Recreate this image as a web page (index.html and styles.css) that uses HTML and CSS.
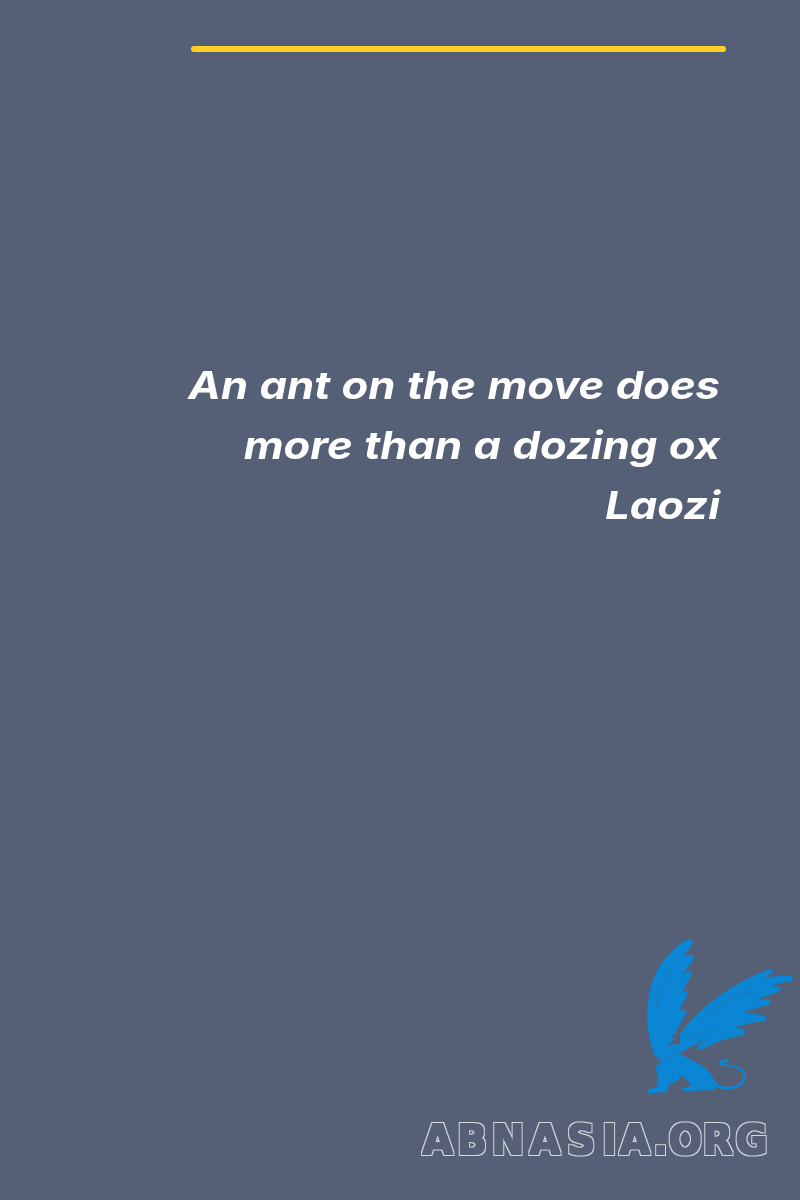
FILE: index.html
```html
<!DOCTYPE html>
<html lang="en">

<head>
  <meta charset="UTF-8">
  <meta name="viewport" content="width=device-width, initial-scale=1.0">
  <title>Quote</title>
  <link rel="stylesheet" href="styles.css">
</head>

<body>
  <div id="page">
    <div class="bar"></div>
    <div class="quote">
      <p>An ant on the move does</p>
      <p>more than a dozing ox</p>
      <p>Laozi</p>
    </div>
    <div class="brand">
      <svg class="griffin" viewBox="0 0 510 510" aria-hidden="true">
        <!-- left wing -->
        <path class="blue" d="M170 29Q186 25 189 38Q184 52 160 78Q176 72 190 76Q198 84 186 97L158 132Q172 124 182 126Q188 132 178 148L156 187Q166 180 172 183Q176 192 166 208L146 243Q156 238 164 240Q172 248 162 264L140 300L110 330L78 388Q62 350 54 300Q46 240 60 180Q74 120 110 80Q140 46 170 29Z"/>
        <path class="cut" d="M122 118Q90 170 76 240" />
        <!-- right wing -->
        <path class="blue" d="M150 312Q176 276 214 240Q270 190 340 152Q380 130 420 118Q432 118 428 128L404 142Q450 136 484 138Q494 146 486 152Q450 160 418 167Q440 168 452 173Q456 182 444 186L372 212Q400 206 418 208Q426 216 416 224L340 246Q376 252 406 257Q414 266 404 272Q360 280 310 292Q330 296 344 300Q350 308 340 314Q306 322 272 332L212 360Q200 358 204 346L240 322L180 352L150 370Z"/>
        <path class="cut" d="M208 276Q280 210 372 178" />
        <path class="cut" d="M165 330Q210 300 262 298" />
        <!-- body -->
        <path class="blue" d="M90 296L104 300L118 296L132 300L142 310L126 316L130 330L112 350L138 340L165 356L150 372Q190 392 225 412Q245 430 254 452Q270 472 300 470Q330 468 340 446Q344 424 316 414L268 404Q262 396 274 392L278 386L302 388L292 396L276 398Q300 408 326 410Q350 424 348 448Q340 474 300 478Q272 480 256 468Q262 476 250 480L160 484Q150 480 164 472L186 468Q172 452 156 436Q146 456 118 462L112 478Q118 486 104 487L52 490Q44 484 58 478L80 472L86 440L76 414L90 396L84 372L96 352Q84 324 92 312Z"/>
        <path class="cut" d="M76 412L150 358" />
      </svg>
      <svg class="wordmark" viewBox="0 0 350 40">
        <defs>
          <filter id="ring" filterUnits="userSpaceOnUse" x="0" y="0" width="350" height="40">
            <feMorphology in="SourceAlpha" operator="dilate" radius="2" result="outer"/>
            <feMorphology in="SourceAlpha" operator="dilate" radius="1" result="inner"/>
            <feComposite in="outer" in2="inner" operator="out" result="edge"/>
            <feFlood flood-color="#d4d6da"/>
            <feComposite in2="edge" operator="in"/>
          </filter>
        </defs>
        <g filter="url(#ring)">
          <text transform="scale(.944 1)" y="36" x="3 39.5 76 116.5 156 193 211.5 247 263.5 299.5 334.5">ABNASIA.ORG</text>
        </g>
      </svg>
    </div>
  </div>
</body>

</html>
```

FILE: styles.css
```css
* {
  margin: 0;
  padding: 0;
  box-sizing: border-box;
}

body {
  background: #555f75;
}

#page {
  display: flex;
  flex-direction: column;
  height: 1200px;
  overflow: hidden;
  padding: 46px 0 0 0;
}

.bar {
  height: 6px;
  margin: 0 74px 0 191px;
  background: #ffd024;
  border-radius: 3px;
}

.quote {
  margin: 303px 80px 0 0;
  text-align: right;
  color: #fff;
  font-family: "Inter", "Liberation Sans", sans-serif;
  font-size: 38px;
  font-style: italic;
  font-weight: 700;
  line-height: 60px;
  word-spacing: 1px;
}

/* the quote face runs wider than anything installed */
.quote p {
  transform: scaleX(1.147);
  transform-origin: right center;
}

.brand {
  display: flex;
  flex-direction: column;
  align-items: flex-end;
  margin-top: auto;
  padding: 0 30px 42px 0;
}

.griffin {
  width: 170px;
  height: 170px;
  margin: 0 -30px 18px 0;
}

.blue {
  fill: #0a86d4;
}

.cut {
  fill: none;
  stroke: #555f75;
  stroke-width: 1.5;
}

.wordmark {
  width: 350px;
  height: 40px;
}

.wordmark text {
  font-family: "DejaVu Sans", sans-serif;
  font-size: 41px;
  font-weight: 700;
  fill: #fff;
}
```
